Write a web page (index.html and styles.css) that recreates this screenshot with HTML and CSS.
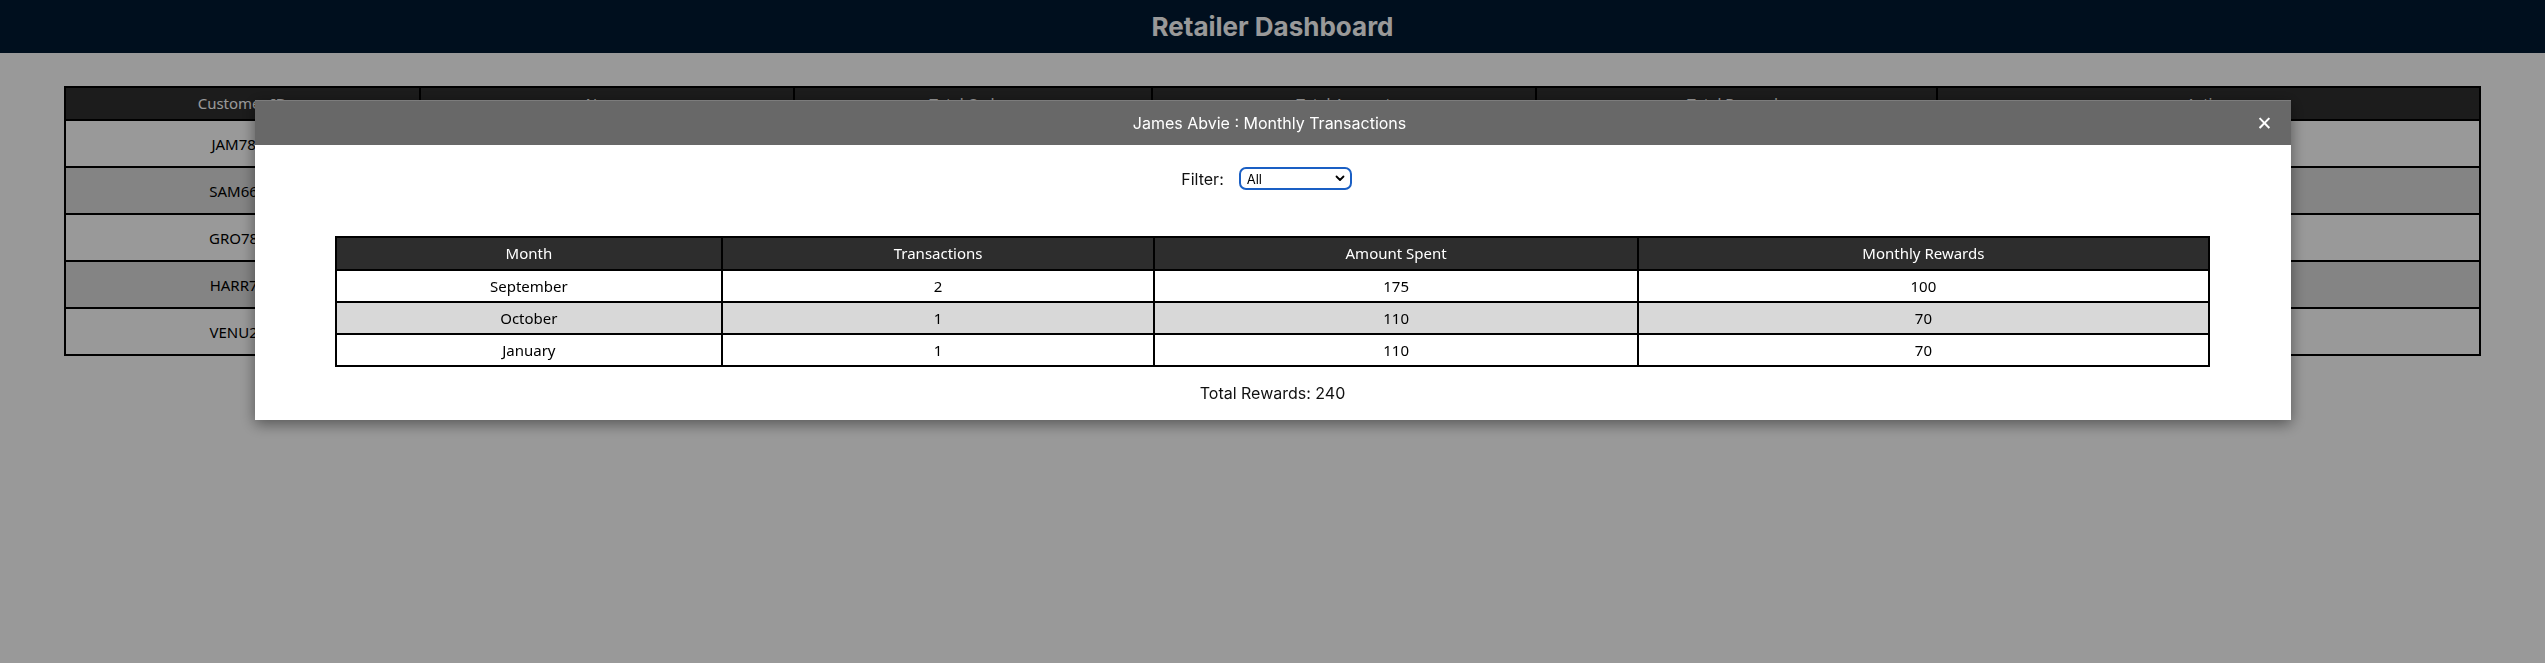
FILE: index.html
```html
<!DOCTYPE html>
<html lang="en">
<head>
<meta charset="utf-8">
<title>Retailer Dashboard</title>
<link rel="stylesheet" href="styles.css">
</head>
<body>
<header class="nav"><h1 class="nav-title">Retailer Dashboard</h1></header>
<main class="page">
  <table class="customers">
    <colgroup>
      <col class="c1"><col class="c2"><col class="c3"><col class="c4"><col class="c5"><col class="c6">
    </colgroup>
    <thead>
      <tr><th>Customer ID</th><th>Name</th><th>Total Orders</th><th>Total Amount</th><th>Total Rewards</th><th>Action</th></tr>
    </thead>
    <tbody>
      <tr><td>JAM7890</td><td>James Abvie</td><td>4</td><td>395</td><td>240</td><td><button class="view">View</button></td></tr>
      <tr><td>SAM6612</td><td>Samuel Ortiz</td><td>3</td><td>260</td><td>150</td><td><button class="view">View</button></td></tr>
      <tr><td>GRO7881</td><td>Grace Owens</td><td>2</td><td>180</td><td>110</td><td><button class="view">View</button></td></tr>
      <tr><td>HARR789</td><td>Harry Reed</td><td>5</td><td>420</td><td>270</td><td><button class="view">View</button></td></tr>
      <tr><td>VENU234</td><td>Venu Gopal</td><td>1</td><td>90</td><td>40</td><td><button class="view">View</button></td></tr>
    </tbody>
  </table>
</main>

<div class="overlay">
  <section class="modal">
    <div class="modal-header">
      <span class="modal-title">James Abvie : Monthly Transactions</span>
      <span class="modal-close">&#x2715;</span>
    </div>
    <div class="modal-body">
      <div class="filter">
        <label class="filter-label" for="f">Filter:</label>
        <span class="select-wrap">
          <select id="f" class="filter-select"><option>All</option><option>September</option><option>October</option><option>January</option></select>
          <svg class="chev" width="10" height="7" viewBox="0 0 10 7"><path d="M1.5 1.5 L5 5 L8.5 1.5" fill="none" stroke="#000" stroke-width="1.8" stroke-linecap="round" stroke-linejoin="round"/></svg>
        </span>
      </div>
      <table class="monthly">
        <colgroup><col class="m1"><col class="m2"><col class="m3"><col class="m4"></colgroup>
        <thead>
          <tr><th>Month</th><th>Transactions</th><th>Amount Spent</th><th>Monthly Rewards</th></tr>
        </thead>
        <tbody>
          <tr><td>September</td><td>2</td><td>175</td><td>100</td></tr>
          <tr class="alt"><td>October</td><td>1</td><td>110</td><td>70</td></tr>
          <tr><td>January</td><td>1</td><td>110</td><td>70</td></tr>
        </tbody>
      </table>
      <p class="total">Total Rewards: 240</p>
    </div>
  </section>
</div>
</body>
</html>
```

FILE: styles.css
```css
html, body {
  margin: 0;
  padding: 0;
}
body {
  background: #ffffff;
  font-family: "Noto Sans", "DejaVu Sans", sans-serif;
  height: 663px;
  overflow: hidden;
}
.nav {
  background: #001a33;
  height: 53px;
  display: flex;
  align-items: center;
  justify-content: center;
}
.nav-title {
  margin: 0;
  color: #ffffff;
  font-family: Inter, "Liberation Sans", sans-serif;
  font-weight: 700;
  font-size: 26px;
}
.page {
  padding-top: 33px;
}
.customers {
  width: 95%;
  margin: 0 auto;
  border-collapse: collapse;
  border: 2px solid #000;
  font-size: 15px;
  table-layout: fixed;
}
.customers .c1 { width: 14.7%; }
.customers .c2 { width: 15.5%; }
.customers .c3 { width: 14.8%; }
.customers .c4 { width: 15.9%; }
.customers .c5 { width: 16.6%; }
.customers .c6 { width: 22.5%; }
.customers th {
  background: #2f2f2f;
  color: #ffffff;
  font-weight: 400;
  padding: 5px 6px 6px;
  border: 2px solid #000;
}
.customers td {
  text-align: center;
  height: 21px;
  padding: 12px 6px;
  border: 2px solid #000;
  color: #000;
  line-height: 20px;
}
.customers tbody tr:nth-child(even) td {
  background: #dcdcdc;
}
.view {
  font-family: inherit;
  font-size: 12px;
  line-height: 14px;
  height: 18px;
  padding: 1px 12px;
  border: 1px solid #555;
  border-radius: 3px;
  background: #eee;
  vertical-align: top;
}

.overlay {
  position: fixed;
  inset: 0;
  background: rgba(0, 0, 0, 0.4);
  display: flex;
  justify-content: center;
  align-items: flex-start;
}
.modal {
  margin-top: 100px;
  width: 80%;
  background: #ffffff;
  box-shadow: 0 4px 14px rgba(0, 0, 0, 0.45);
}
.modal-header {
  background: #686868;
  border-top: 1px solid #7c7c7c;
  height: 44px;
  display: flex;
  align-items: center;
  padding: 0 18px 0 28px;
}
.modal-title {
  flex: 1;
  text-align: center;
  color: #ffffff;
  font-family: Inter, "Liberation Sans", sans-serif;
  font-size: 16px;
}
.modal-close {
  color: #ffffff;
  font-family: "DejaVu Sans", sans-serif;
  font-weight: 700;
  font-size: 19px;
  line-height: 1;
}
.modal-body {
  padding: 22px 0 17px;
  display: flex;
  flex-direction: column;
  align-items: center;
}
.filter {
  display: flex;
  align-items: center;
  gap: 15px;
  height: 23px;
  padding-right: 12px;
  font-family: Inter, "Liberation Sans", sans-serif;
  font-size: 16px;
  color: #111;
}
.select-wrap {
  position: relative;
  display: inline-flex;
}
.filter-select {
  appearance: none;
  -webkit-appearance: none;
  width: 113px;
  height: 23px;
  box-sizing: border-box;
  border: 2px solid #1a5fc4;
  border-radius: 7px;
  background: #fff;
  font-family: Inter, "Liberation Sans", sans-serif;
  font-size: 13px;
  color: #000;
  padding: 0 0 0 6px;
  outline: none;
}
.chev {
  position: absolute;
  right: 7px;
  top: 8px;
  pointer-events: none;
}
.monthly {
  width: 92.1%;
  margin-top: 46px;
  border-collapse: collapse;
  border: 2px solid #000;
  table-layout: fixed;
  font-size: 15px;
}
.monthly .m1 { width: 20.6%; }
.monthly .m2 { width: 23.1%; }
.monthly .m3 { width: 25.8%; }
.monthly .m4 { width: 30.5%; }
.monthly th {
  background: #2d2d2d;
  color: #ffffff;
  font-weight: 400;
  padding: 5px 6px 6px;
  border: 2px solid #000;
}
.monthly td {
  text-align: center;
  padding: 5px 6px;
  border: 2px solid #000;
  color: #000;
  background: #ffffff;
}
.monthly tr.alt td {
  background: #d8d8d8;
}
.total {
  margin: 16px 0 0;
  font-family: Inter, "Liberation Sans", sans-serif;
  font-size: 16px;
  color: #111;
}
```
